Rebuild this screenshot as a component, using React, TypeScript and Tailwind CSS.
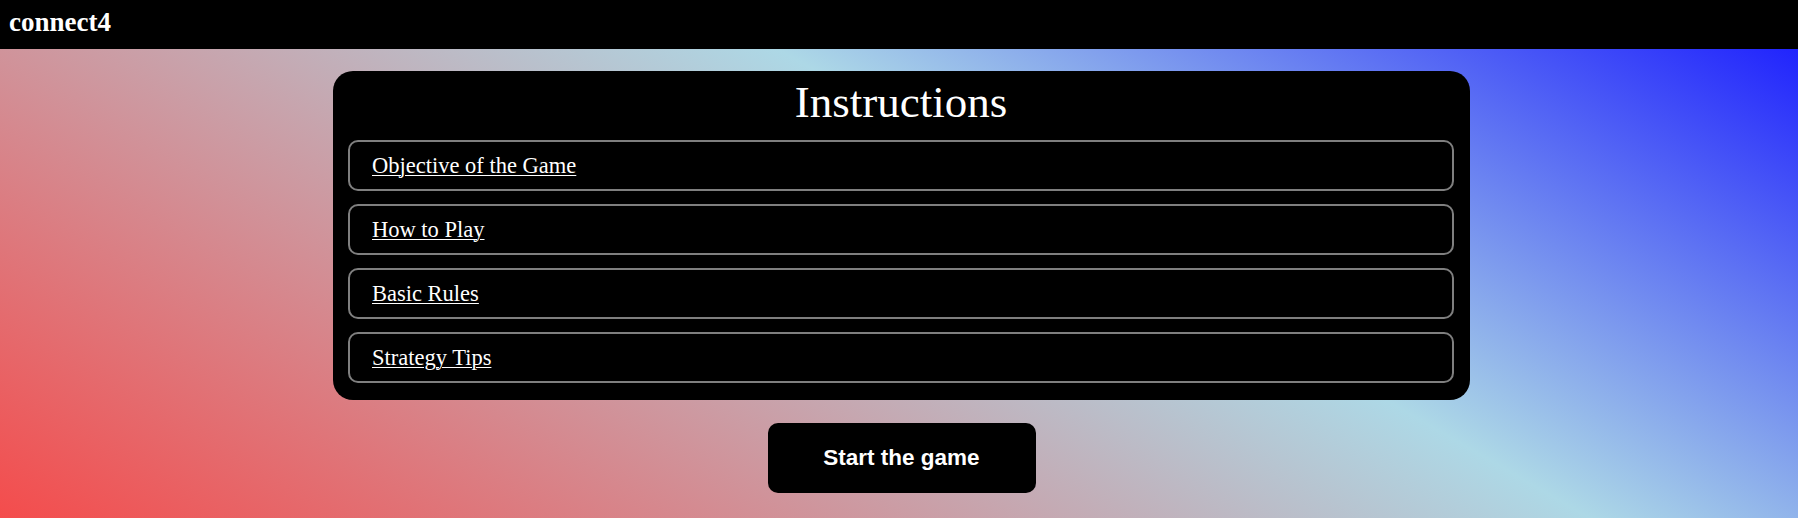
const sections = [
  "Objective of the Game",
  "How to Play",
  "Basic Rules",
  "Strategy Tips",
];

function Header() {
  return (
    <header className="h-[49px] bg-black px-[9px] pt-[9px]">
      <span className="text-[27px] leading-[26px] font-bold text-white">connect4</span>
    </header>
  );
}

function SectionRow({ title }: { title: string }) {
  return (
    <div className="h-[51px] flex items-center pl-[22px] border-2 border-[#7f7f7f] rounded-[10px]">
      <a href="#" className="text-[22.5px] text-white underline underline-offset-[2px] decoration-1">
        {title}
      </a>
    </div>
  );
}

export default function App() {
  return (
    <div
      className="min-h-[518px] bg-[linear-gradient(30deg,#f44c4c_0%,#add8e6_59%,#1515ff_100%)]"
      style={{ fontFamily: '"Liberation Serif", "Times New Roman", serif' }}
    >
      <Header />
      <main className="flex flex-col items-center pl-[5px] pt-[22px] pb-[24px]">
        <div className="w-[1137px] bg-black rounded-[20px] pt-[6px] pl-[15px] pr-[16px] pb-[17px] flex flex-col gap-[13px]">
          <h1 className="text-center text-[45px] leading-[50px] text-white">Instructions</h1>
          {sections.map((s) => (
            <SectionRow key={s} title={s} />
          ))}
        </div>
        <button
          className="mt-[23px] w-[268px] h-[70px] bg-black rounded-[10px] text-white font-bold text-[22.5px]"
          style={{ fontFamily: '"Liberation Sans", Arial, sans-serif' }}
        >
          Start the game
        </button>
      </main>
    </div>
  );
}
